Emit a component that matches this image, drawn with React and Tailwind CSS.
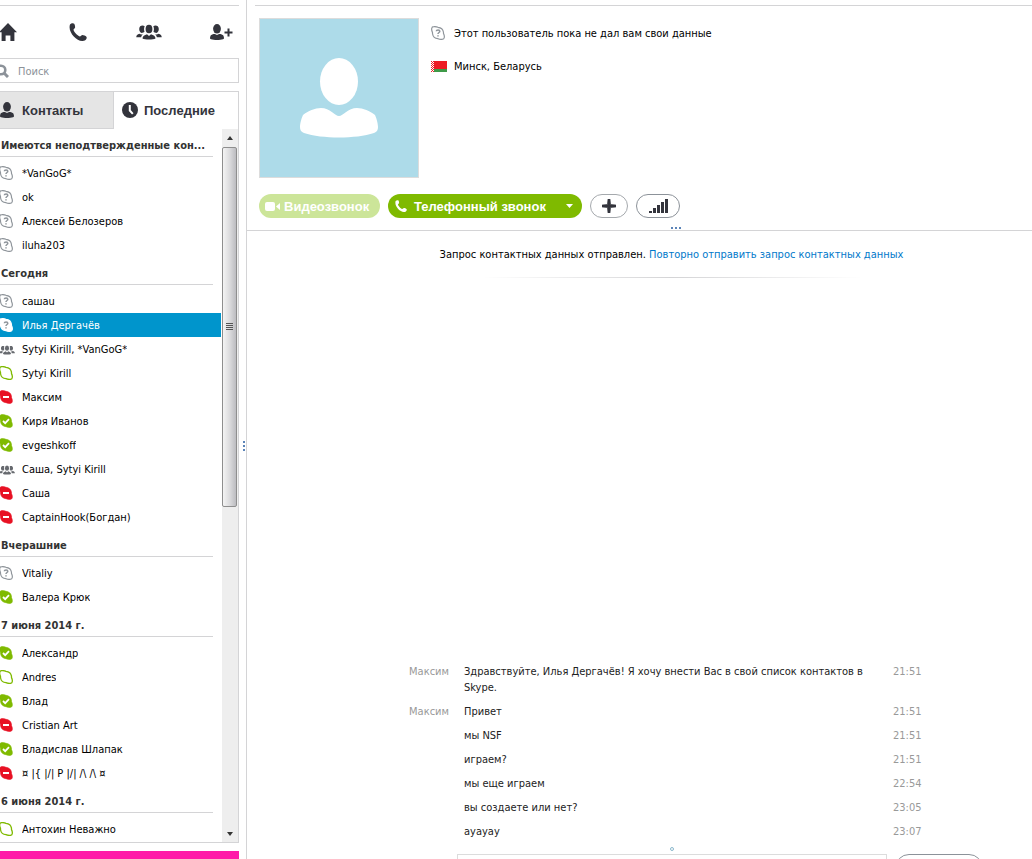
import { useState } from "react";
import clsx from "clsx";

const groups = [
  {
    title: "Имеются неподтвержденные кон...",
    items: [
      { name: "*VanGoG*", status: "unknown" },
      { name: "ok", status: "unknown" },
      { name: "Алексей Белозеров", status: "unknown" },
      { name: "iluha203", status: "unknown" },
    ],
  },
  {
    title: "Сегодня",
    items: [
      { name: "сашаu", status: "unknown" },
      { name: "Илья Дергачёв", status: "unknown" },
      { name: "Sytyi Kirill, *VanGoG*", status: "group" },
      { name: "Sytyi Kirill", status: "offline" },
      { name: "Максим", status: "busy" },
      { name: "Киря Иванов", status: "online" },
      { name: "evgeshkoff", status: "online" },
      { name: "Саша, Sytyi Kirill", status: "group" },
      { name: "Саша", status: "busy" },
      { name: "CaptainHook(Богдан)", status: "busy" },
    ],
  },
  {
    title: "Вчерашние",
    items: [
      { name: "Vitaliy", status: "unknown" },
      { name: "Валера Крюк", status: "online" },
    ],
  },
  {
    title: "7 июня 2014 г.",
    items: [
      { name: "Александр", status: "online" },
      { name: "Andres", status: "offline" },
      { name: "Влад", status: "online" },
      { name: "Cristian Art", status: "busy" },
      { name: "Владислав Шлапак", status: "online" },
      { name: "¤ |{ |/| P |/| /\\ /\\ ¤", status: "busy" },
    ],
  },
  {
    title: "6 июня 2014 г.",
    items: [{ name: "Антохин Неважно", status: "offline" }],
  },
];

const messages = [
  {
    author: "Максим",
    text: "Здравствуйте, Илья Дергачёв! Я хочу внести Вас в свой список контактов в Skype.",
    time: "21:51",
  },
  { author: "Максим", text: "Привет", time: "21:51" },
  { text: "мы NSF", time: "21:51" },
  { text: "играем?", time: "21:51" },
  { text: "мы еще играем", time: "22:54" },
  { text: "вы создаете или нет?", time: "23:05" },
  { text: "ауауау", time: "23:07" },
];

// Two lobes, top left and bottom right
const BLOB =
  "M.7 2.500C.8 1.300 1.800.6 3 .6 4.500.5 5.800.8 7 1.300 9.800 1.600 12 3.300 12.400 6 12.500 6.500 12.500 7 12.500 7.600 13.200 9 13.500 10.300 13.300 11.500 13.200 12.700 12.200 13.400 11 13.400 9.500 13.500 8.200 13.200 7 12.700 4.200 12.400 2 10.700 1.600 8 1.500 7.500 1.400 7 1.500 6.400.8 5 .5 3.700.7 2.500Z";

const StatusIcon = ({ status, selected }) => {
  if (status === "group") {
    return (
      <svg viewBox="0 0 26 16" className="mt-[2px] h-[10px] w-4 shrink-0 text-[#66696e]">
        <PeopleShape />
      </svg>
    );
  }

  return (
    <svg viewBox="0 0 14 14" className="h-[14px] w-[14px] shrink-0">
      {status === "online" && (
        <>
          <path d={BLOB} fill="#7fba00" stroke="#7fba00" strokeWidth=".6" />
          <path d="M4 7l2.200 2.200L10 5.200" fill="none" stroke="#fff" strokeWidth="1.800" />
        </>
      )}
      {status === "busy" && (
        <>
          <path d={BLOB} fill="#e81123" stroke="#e81123" strokeWidth=".6" />
          <path d="M4 7h6" stroke="#fff" strokeWidth="2" />
        </>
      )}
      {status === "offline" && (
        <path d={BLOB} fill="#fff" stroke="#7fba00" strokeWidth="1.300" />
      )}
      {status === "unknown" && (
        <>
          <path
            d={BLOB}
            fill="#fff"
            stroke={selected ? "#fff" : "#8f959b"}
            strokeWidth="1.200"
          />
          <path
            d="M5.300 5.300c.1-1.900 3.500-1.900 3.500 0C8.800 6.500 7 6.500 7 8M7 9.200v1.200"
            fill="none"
            stroke="#8f959b"
            strokeWidth="1.500"
          />
        </>
      )}
    </svg>
  );
};

const PeopleShape = () => (
  <g fill="currentColor">
    <ellipse cx="13" cy="5" rx="3.400" ry="4.300" />
    <path d="M6.500 14.500c0-2.500 2-3.500 4.500-4.300L13 12l2-1.800c2.500.8 4.500 1.800 4.500 4.300-2 1.300-11 1.300-13 0Z" />
    <path d="M8.700 2.300C7 .9 3.200 1.300 3.200 5c0 2 1 3.600 2.400 4 1.300 0 2.200-.5 2.900-1.200C7.900 6 7.900 4 8.700 2.300ZM17.300 2.300C19 .9 22.800 1.300 22.800 5c0 2-1 3.600-2.400 4-1.300 0-2.200-.5-2.900-1.200.6-1.800.6-3.800-.2-5.500Z" />
    <path d="M3.500 9.700c.7.700 2.300 1 3.500.6-1 .8-1.700 1.800-1.800 3H.300c-.2-2 1.200-3 3.200-3.600ZM22.500 9.700c-.7.700-2.300 1-3.500.6 1 .8 1.700 1.800 1.800 3h4.900c.2-2-1.200-3-3.200-3.600Z" />
  </g>
);

const PersonShape = () => (
  <g fill="currentColor">
    <ellipse cx="8" cy="4.800" rx="3.900" ry="4.800" />
    <path d="M1.800 11.300c1.500-1 3-1.400 4-1.300 1 .2 1.500 1 2.200 1s1.200-.8 2.200-1c1-.1 2.500.3 4 1.300.5 1 .8 1.900.8 2.700 0 .7-.3 1-1 1.200-3 1-9 1-12 0-.7-.2-1-.5-1-1.200 0-.8.3-1.700.8-2.700Z" />
  </g>
);

const PhoneShape = () => (
  <path
    fill="currentColor"
    d="M1 1.500C2 .2 4.500-.2 5.200.8c.6 1 1 2.600.9 3.700-.1.900-1.600 1.400-1.600 2.300.2 2 3.800 6 6.300 6.600.9.100 1.600-1.300 2.600-1.400 1.200 0 3.200.8 4 1.700.8 1-.1 3-1.600 3.800C9.500 20.500-1.800 9.500 1 1.500Z"
  />
);

const ContactRow = ({ item, selected, onSelect }) => (
  <li>
    <button
      type="button"
      onClick={onSelect}
      className={clsx(
        "flex h-6 w-full items-center text-left",
        selected ? "bg-[#0095cc] text-white" : "text-black",
      )}
    >
      <span className="-ml-px flex w-[23px] shrink-0 items-center">
        <StatusIcon status={item.status} selected={selected} />
      </span>
      <span className="truncate pt-[2px]">{item.name}</span>
    </button>
  </li>
);

const Scrollbar = () => (
  <div className="flex w-4 shrink-0 flex-col bg-[#eeeeee] pr-px">
    <div className="flex h-[18px] items-center justify-center">
      <svg viewBox="0 0 6 4" className="h-1 w-[6px]">
        <path d="M0 4l3-4 3 4z" fill="#333" />
      </svg>
    </div>
    <div className="flex-1">
      <div className="flex h-[53%] flex-col items-center justify-center gap-px rounded-[2px] border border-[#8e8e8e] bg-linear-to-r from-[#f4f4f4] via-[#dcdcde] to-[#bcbcc0]">
        <span className="h-px w-[7px] bg-[#555]" />
        <span className="h-px w-[7px] bg-[#555]" />
        <span className="h-px w-[7px] bg-[#555]" />
        <span className="h-px w-[7px] bg-[#555]" />
      </div>
    </div>
    <div className="flex h-4 items-center justify-center">
      <svg viewBox="0 0 6 4" className="h-1 w-[6px]">
        <path d="M0 0l3 4 3-4z" fill="#333" />
      </svg>
    </div>
  </div>
);

const Sidebar = () => {
  const [active, setActive] = useState("Илья Дергачёв");

  return (
    <aside className="flex w-[247px] shrink-0 items-center border-r border-[#d4d4d6]">
      <div className="flex h-full w-[239px] flex-col pt-[5px]">
        <nav className="flex h-[53px] items-center justify-between border-t border-[#d4d4d6] pr-[6px] text-[#33343c]">
          <button type="button" aria-label="Домой" className="w-[22px]">
            <svg viewBox="0 0 18 18" className="-ml-px h-[18px] w-[18px]">
              <path
                fill="currentColor"
                d="M9 0l9 9.300h-2.600V18h-4v-5.500H6.600V18h-4V9.300H0z"
              />
            </svg>
          </button>
          <button type="button" aria-label="Звонки">
            <svg viewBox="0 0 18 18" className="h-[18px] w-[18px]">
              <PhoneShape />
            </svg>
          </button>
          <button type="button" aria-label="Группы" className="pl-[3px]">
            <svg viewBox="0 0 26 16" className="h-4 w-[26px]">
              <PeopleShape />
            </svg>
          </button>
          <button type="button" aria-label="Добавить контакт">
            <svg viewBox="0 0 24 17" className="h-[17px] w-6">
              <PersonShape />
              <path d="M19.500 4.500v8M15.500 8.500h8" stroke="currentColor" strokeWidth="2" />
            </svg>
          </button>
        </nav>

        <label className="flex h-[25px] items-center border-y border-r border-[#d4d4d6]">
          <svg viewBox="0 0 14 14" className="-ml-[5px] h-[14px] w-[14px] shrink-0">
            <circle cx="6" cy="6" r="4.300" fill="none" stroke="#8c9299" strokeWidth="2.600" />
            <path d="M9 9l4 4" stroke="#8c9299" strokeWidth="3" />
          </svg>
          <input
            type="text"
            aria-label="Поиск"
            placeholder="Поиск"
            className="min-w-0 flex-1 pt-[2px] pl-[9px] outline-none placeholder:text-[#8c9299]"
          />
        </label>

        <div className="mt-2 flex h-[38px] border-t border-r border-[#d4d4d6] font-['Liberation_Sans',sans-serif] text-[13px] font-bold text-[#33343c]">
          <button
            type="button"
            className="flex w-[114px] items-center gap-[7px] border-r border-b border-[#d4d4d6] bg-[#e5e5e5]"
          >
            <svg viewBox="0 0 16 16" className="-ml-px h-4 w-4">
              <PersonShape />
            </svg>
            <span className="pt-[2px]">Контакты</span>
          </button>
          <button
            type="button"
            className="flex flex-1 items-center gap-[6px] border-b border-transparent pl-2"
          >
            <svg viewBox="0 0 16 16" className="h-4 w-4">
              <circle cx="8" cy="8" r="8" fill="currentColor" />
              <path d="M7.800 3v5.500l3 3.300" fill="none" stroke="#fff" strokeWidth="2" />
            </svg>
            <span className="pt-[2px]">Последние</span>
          </button>
        </div>

        <div className="flex min-h-0 flex-1 border-r border-b border-[#d4d4d6]">
          <div className="min-w-0 flex-1 overflow-hidden pr-px">
            {groups.map((group) => (
              <section key={group.title}>
                <h2 className="mr-2 mb-1 flex h-7 items-center border-b border-[#d4d4d6] pt-[6px] pl-px font-bold whitespace-nowrap text-[#333]">
                  {group.title}
                </h2>
                <ul>
                  {group.items.map((item) => (
                    <ContactRow
                      key={item.name}
                      item={item}
                      selected={item.name === active}
                      onSelect={() => setActive(item.name)}
                    />
                  ))}
                </ul>
              </section>
            ))}
          </div>
          <Scrollbar />
        </div>

        <div className="mt-2 h-2 bg-[#ff1aa8]" />
      </div>

      {/* Drag handle between the panes */}
      <div className="mt-8 ml-1 flex flex-col gap-[2px]">
        <span className="h-[2px] w-[2px] bg-[#5b84b8]" />
        <span className="h-[2px] w-[2px] bg-[#5b84b8]" />
        <span className="h-[2px] w-[2px] bg-[#5b84b8]" />
      </div>
    </aside>
  );
};

const Flag = () => (
  <svg viewBox="0 0 16 11" className="h-[11px] w-4">
    <path d="M0 0h16v8H0z" fill="#ed1c24" />
    <path d="M0 8h16v3H0z" fill="#3f9a49" />
    <path d="M0 0h3v11H0z" fill="#fff" />
    <path
      d="M.5 0v11M2.500 0v11"
      stroke="#ed1c24"
      strokeDasharray="1 1"
    />
    <path d="M1.500 1v10" stroke="#ed1c24" strokeDasharray="1 1" />
  </svg>
);

const ProfileHeader = () => (
  <header className="border-b border-[#d4d4d6] pt-[5px]">
    <div className="ml-2 border-t border-[#d4d4d6] pt-3 pl-1">
      <div className="flex">
        <svg
          viewBox="0 0 158 158"
          className="h-40 w-40 shrink-0 border border-[#dcdcdc] bg-[#addbe9] text-white"
        >
          <ellipse cx="79" cy="62.500" rx="19" ry="23.500" fill="currentColor" />
          <path
            fill="currentColor"
            d="M43 96c5-4 12-7 18-7 9 0 14 8 18 8s9-8 18-8c6 0 13 3 18 7 1 2 3 8 3 12 0 3-1 5-4 6-18 6-52 6-70 0-3-1-4-3-4-6 0-4 2-10 3-12Z"
          />
        </svg>
        <div className="flex flex-col gap-[15px] pt-[6px] pl-3">
          <p className="flex items-center gap-[9px]">
            <StatusIcon status="unknown" />
            <span className="pt-[2px]">Этот пользователь пока не дал вам свои данные</span>
          </p>
          <p className="flex items-center gap-[7px]">
            <Flag />
            <span className="pt-[2px]">Минск, Беларусь</span>
          </p>
        </div>
      </div>

      <div className="mt-4 flex h-6 gap-2 font-['Liberation_Sans',sans-serif] text-[13px] font-bold text-white">
        <button
          type="button"
          disabled
          className="flex w-[121px] items-center gap-1 rounded-full bg-[#cce599] pl-[6px]"
        >
          <svg viewBox="0 0 15 9" className="h-[9px] w-[15px]">
            <rect width="10" height="9" rx="2" fill="currentColor" />
            <path d="M11 4.500L15 1v7z" fill="currentColor" />
          </svg>
          <span className="pt-[2px]">Видеозвонок</span>
        </button>
        <button
          type="button"
          className="flex w-[194px] items-center gap-[7px] rounded-full bg-[#7fba00] pr-[9px] pl-[7px]"
        >
          <svg viewBox="0 0 18 18" className="h-3 w-3">
            <PhoneShape />
          </svg>
          <span className="flex-1 pt-[2px] text-left whitespace-nowrap">Телефонный звонок</span>
          <svg viewBox="0 0 7 4" className="h-1 w-[7px]">
            <path d="M0 0h7L3.500 4z" fill="currentColor" />
          </svg>
        </button>
        <button
          type="button"
          aria-label="Добавить"
          className="flex w-[38px] items-center justify-center rounded-full border border-[#a5a9ad] text-[#33343c]"
        >
          <svg viewBox="0 0 14 14" className="h-[14px] w-[14px]">
            <path
              fill="currentColor"
              d="M6 0h2l.6 5.400L14 6v2l-5.400.600L8 14H6l-.6-5.400L0 8V6l5.400-.600z"
              stroke="currentColor"
              strokeWidth=".6"
            />
          </svg>
        </button>
        <button
          type="button"
          aria-label="Качество связи"
          className="flex w-11 items-center justify-center rounded-full border border-[#8c9299] text-[#33343c]"
        >
          <svg viewBox="0 0 19 14" className="h-[14px] w-[19px]">
            <path
              fill="currentColor"
              d="M0 12h3v2H0zM4 9h3v5H4zM8 6h3v8H8zM12 3h3v11h-3zM16 0h3v14h-3z"
            />
          </svg>
        </button>
      </div>

      <div className="mt-[9px] flex h-[3px] justify-center gap-[2px] pl-[60px]">
        <span className="h-[2px] w-[2px] bg-[#5b84b8]" />
        <span className="h-[2px] w-[2px] bg-[#5b84b8]" />
        <span className="h-[2px] w-[2px] bg-[#5b84b8]" />
      </div>
    </div>
  </header>
);

const Chat = () => (
  <div className="flex min-h-0 flex-1 flex-col">
    <div className="flex flex-col items-center pt-4 pl-16">
      <p>
        Запрос контактных данных отправлен.{" "}
        <a href="#resend" className="text-[#0078ca]">
          Повторно отправить запрос контактных данных
        </a>
      </p>
      <div className="mt-[14px] h-px w-[380px] bg-linear-to-r from-transparent via-[#d4d4d6] to-transparent" />
    </div>

    <ol className="flex flex-1 flex-col justify-end">
      {messages.map((message) => (
        <li key={message.text} className="flex gap-[15px] pt-[5px] pb-[3px]">
          <span className="w-[202px] shrink-0 text-right text-[#999]">{message.author}</span>
          <p className="w-[414px] pr-2 text-[#222]">{message.text}</p>
          <time className="text-[#999]">{message.time}</time>
        </li>
      ))}
    </ol>

    <form className="h-4 shrink-0 overflow-hidden">
      <div className="flex justify-center pt-1 pl-16">
        <span className="h-1 w-1 rounded-full border border-[#8ab8cc]" />
      </div>
      <div className="mt-[3px] flex items-start gap-2 pl-[210px]">
        <textarea
          aria-label="Сообщение"
          className="h-10 w-[430px] resize-none border border-[#dcdcdc] outline-none"
        />
        <button
          type="submit"
          aria-label="Отправить"
          className="h-7 w-[88px] rounded-full border border-[#8c9299]"
        />
      </div>
    </form>
  </div>
);

export default function App() {
  return (
    <div className="flex h-screen overflow-hidden bg-white font-['DejaVu_Sans_Condensed','DejaVu_Sans',sans-serif] text-[11px] leading-4 text-black">
      <Sidebar />
      <main className="flex min-w-0 flex-1 flex-col">
        <ProfileHeader />
        <Chat />
      </main>
    </div>
  );
}
